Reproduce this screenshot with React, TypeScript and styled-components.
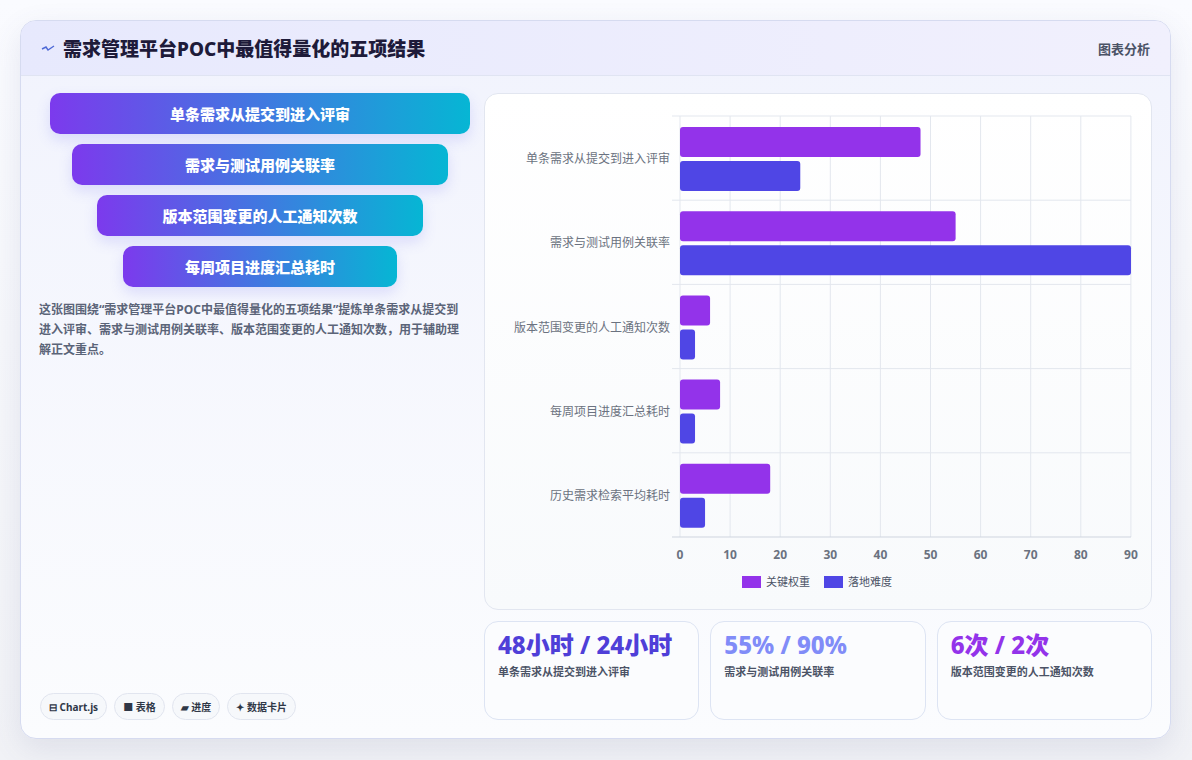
import React from "react";
import styled, { createGlobalStyle } from "styled-components";

const Global = createGlobalStyle`
  html, body { margin: 0; padding: 0; background: #f3f4f8; }
  body { font-family: "Noto Sans", "Noto Sans CJK SC", sans-serif; }
`;

const Page = styled.div`
  width: 1192px; height: 760px; box-sizing: border-box;
  padding: 20px 21px 21px 20px;
  background: linear-gradient(180deg, #fafbff 0%, #f1f2f6 100%);
`;
const Card = styled.div`
  height: 100%; box-sizing: border-box;
  border: 1px solid #d6dbf0; border-radius: 16px; overflow: hidden;
  background: linear-gradient(180deg, #f1f3fd 0%, #fbfcfe 100%);
  box-shadow: 0 10px 30px rgba(80, 90, 140, 0.12);
  display: flex; flex-direction: column;
`;
const Header = styled.div`
  height: 55px; flex: none; box-sizing: border-box;
  display: flex; align-items: center; justify-content: space-between;
  padding: 0 20px 0 20px;
  background: linear-gradient(90deg, #e7e9fd 0%, #f1f0fd 100%);
  border-bottom: 1px solid #e0e4f2;
`;
const Title = styled.h1`
  margin: 0; display: flex; align-items: center; gap: 8px;
  font-size: 19px; font-weight: 800; color: #1e1b3a;
`;
const Tag = styled.span`
  font-size: 13px; font-weight: 600; color: #4b5366;
`;
const Body = styled.div`
  flex: 1; display: flex; gap: 15px; padding: 17px 18px 18px 18px; min-height: 0;
`;
const Left = styled.div`
  width: 430px; display: flex; flex-direction: column;
`;
const Funnel = styled.div`
  display: flex; flex-direction: column; align-items: center; gap: 10px;
  padding-left: 6px; margin-right: -6px;
`;
const Step = styled.div<{ w: number }>`
  width: ${p => p.w}px; height: 41px; border-radius: 10px;
  background: linear-gradient(90deg, #7c3aed 0%, #06b6d4 100%);
  color: #fff; font-size: 15px; font-weight: 800;
  display: flex; align-items: center; justify-content: center;
  box-shadow: 0 6px 14px rgba(99, 102, 241, 0.18);
`;
const Desc = styled.p`
  margin: 13px 0 0 0; font-size: 12px; font-weight: 700; line-height: 20px; color: #5b6478;
`;
const Chips = styled.div`
  margin-top: auto; display: flex; gap: 7px; padding-left: 1px;
`;
const Chip = styled.span`
  height: 27px; box-sizing: border-box; padding: 0 8px; border-radius: 14px;
  border: 1px solid #e1e5ef; background: #f6f8fb;
  display: inline-flex; align-items: center; gap: 3px;
  font-size: 10px; font-weight: 700; color: #2f3747;
`;
const Right = styled.div`
  flex: 1; display: flex; flex-direction: column; gap: 11px; min-width: 0;
`;
const ChartBox = styled.div`
  height: 517px; box-sizing: border-box; border: 1px solid #e2e6f0; border-radius: 14px;
  background: linear-gradient(180deg, #ffffff 0%, #f8fafc 100%);
`;
const Stats = styled.div`
  flex: 1; display: grid; grid-template-columns: repeat(3, 1fr); gap: 11px;
`;
const Stat = styled.div`
  border: 1px solid #dde4f3; border-radius: 14px; background: #fbfcfe;
  padding: 10px 13px; display: flex; flex-direction: column;
`;
const Value = styled.div<{ c: string }>`
  font-size: 24px; font-weight: 800; line-height: 26px; color: ${p => p.c};
`;
const Label = styled.div`
  margin-top: 5px; font-size: 11px; font-weight: 600; color: #4b5366;
`;

const cats = ["单条需求从提交到进入评审", "需求与测试用例关联率", "版本范围变更的人工通知次数", "每周项目进度汇总耗时", "历史需求检索平均耗时"];
const A = [48, 55, 6, 8, 18];
const B = [24, 90, 3, 3, 5];

function Chart() {
  const ox = 195, top = 22, w = 451, band = 84.2, sc = w / 90;
  return (
    <svg width="669" height="517" viewBox="0 0 669 517" style={{ display: "block" }}>
      {Array.from({ length: 10 }).map((_, i) => (
        <line key={i} x1={ox + i * 50.1} x2={ox + i * 50.1} y1={top} y2={top + band * 5} stroke="#e3e7ee" />
      ))}
      {Array.from({ length: 6 }).map((_, i) => (
        <line key={i} x1={ox - 8} x2={ox + w} y1={top + i * band} y2={top + i * band} stroke={i === 5 ? "#cfd5df" : "#e3e7ee"} />
      ))}
      {cats.map((c, i) => {
        const y = top + i * band;
        return (
          <g key={c}>
            <text x={ox - 10} y={y + band / 2 + 5} textAnchor="end" fontSize="12" fill="#6b7280" fontFamily="Noto Sans CJK SC, sans-serif">{c}</text>
            <rect x={ox} y={y + 11} width={A[i] * sc} height={30} rx={3} fill="#9333ea" />
            <rect x={ox} y={y + 45} width={B[i] * sc} height={30} rx={3} fill="#4f46e5" />
          </g>
        );
      })}
      {Array.from({ length: 10 }).map((_, i) => (
        <text key={i} x={ox + i * 50.1} y={465} textAnchor="middle" fontSize="12" fontWeight="700" fill="#6b7280" fontFamily="Noto Sans, sans-serif">{i * 10}</text>
      ))}
      <rect x={257} y={482} width={19} height={12} fill="#9333ea" />
      <text x={281} y={492} fontSize="11" fill="#4b5366" fontFamily="Noto Sans CJK SC, sans-serif">关键权重</text>
      <rect x={339} y={482} width={19} height={12} fill="#4f46e5" />
      <text x={363} y={492} fontSize="11" fill="#4b5366" fontFamily="Noto Sans CJK SC, sans-serif">落地难度</text>
    </svg>
  );
}

export default function App() {
  return (
    <>
      <Global />
      <Page>
        <Card>
          <Header>
            <Title>
              <svg width="14" height="10" viewBox="0 0 14 10"><path d="M1 6 L5 4 L7 7 L13 3" stroke="#4f6ad6" strokeWidth="1.4" fill="none" /></svg>
              需求管理平台POC中最值得量化的五项结果
            </Title>
            <Tag>图表分析</Tag>
          </Header>
          <Body>
            <Left>
              <Funnel>
                <Step w={420}>单条需求从提交到进入评审</Step>
                <Step w={376}>需求与测试用例关联率</Step>
                <Step w={326}>版本范围变更的人工通知次数</Step>
                <Step w={274}>每周项目进度汇总耗时</Step>
              </Funnel>
              <Desc>这张图围绕“需求管理平台POC中最值得量化的五项结果”提炼单条需求从提交到进入评审、需求与测试用例关联率、版本范围变更的人工通知次数，用于辅助理解正文重点。</Desc>
              <Chips>
                <Chip>⊟ Chart.js</Chip>
                <Chip>■ 表格</Chip>
                <Chip>▰ 进度</Chip>
                <Chip>✦ 数据卡片</Chip>
              </Chips>
            </Left>
            <Right>
              <ChartBox><Chart /></ChartBox>
              <Stats>
                <Stat><Value c="#4f3fd8">48小时 / 24小时</Value><Label>单条需求从提交到进入评审</Label></Stat>
                <Stat><Value c="#818cf8">55% / 90%</Value><Label>需求与测试用例关联率</Label></Stat>
                <Stat><Value c="#9333ea">6次 / 2次</Value><Label>版本范围变更的人工通知次数</Label></Stat>
              </Stats>
            </Right>
          </Body>
        </Card>
      </Page>
    </>
  );
}
